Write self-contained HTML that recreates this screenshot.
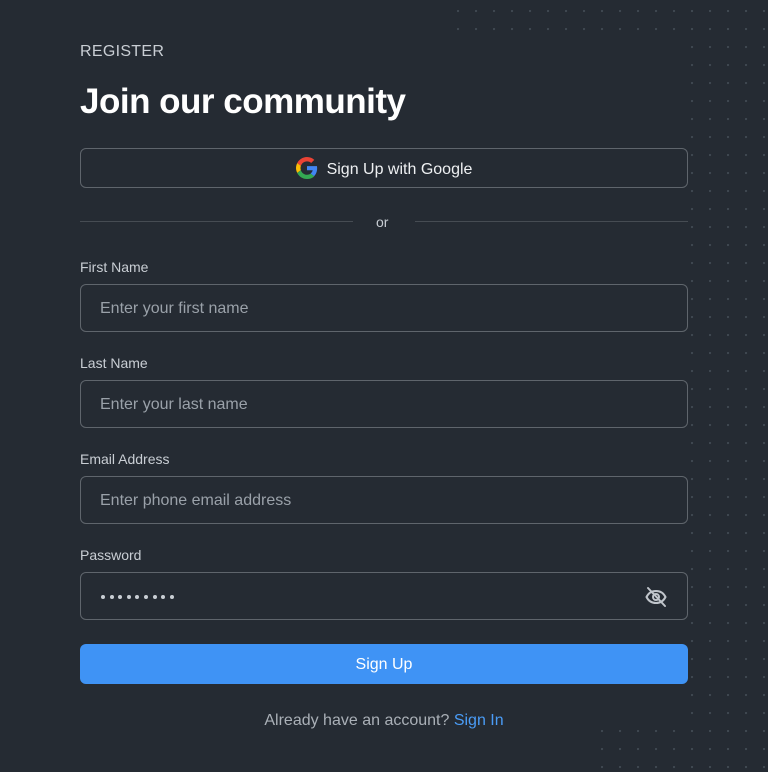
<!DOCTYPE html>
<html><head><meta charset="utf-8"><style>
*{box-sizing:border-box;margin:0;padding:0}
html,body{width:768px;height:772px;overflow:hidden}
body{background:#252b33;font-family:"Liberation Sans",sans-serif;position:relative;color:#fff}
.dots{position:absolute;background-image:radial-gradient(circle at 1px 1px,#3f4851 1px,transparent 1.3px);background-size:18px 18px}
.lbl{position:absolute;left:80px;font-size:14px;color:#c9ced4}
.inp{position:absolute;left:80px;width:608px;height:48px;border:1px solid #5f656c;border-radius:6px;font-size:16px;color:#9aa1a9;padding-left:19px;line-height:48px}
.pd{position:absolute;top:595px;width:4px;height:4px;border-radius:50%;background:#c9ced4}
</style></head><body>
<div class="dots" style="left:457px;top:10px;width:311px;height:30px"></div>
<div class="dots" style="left:691px;top:10px;width:77px;height:762px"></div>
<div class="dots" style="left:601px;top:730px;width:167px;height:42px"></div>

<div style="position:absolute;left:80px;top:43px;font-size:16px;color:#c9ced4;letter-spacing:.3px">REGISTER</div>
<div style="position:absolute;left:80px;top:82px;font-size:35px;font-weight:bold;letter-spacing:-.5px">Join our community</div>

<div style="position:absolute;left:80px;top:148px;width:608px;height:40px;border:1px solid #5f656c;border-radius:6px;display:flex;align-items:center;justify-content:center;font-size:16px;color:#eef0f2;padding-top:3px">
<svg width="22" height="22" viewBox="0 0 48 48" style="margin-right:9px;margin-top:-3px"><path fill="#EA4335" d="M24 9.5c3.5 0 6.6 1.2 9.1 3.6l6.8-6.800C35.8 2.4 30.3 0 24 0 14.6 0 6.6 5.4 2.7 13.3l7.9 6.1C12.5 13.6 17.8 9.5 24 9.5z"/><path fill="#4285F4" d="M46.1 24.5c0-1.6-.1-3.1-.4-4.5H24v9h12.4c-.5 2.9-2.2 5.3-4.6 7l7.5 5.8c4.4-4 6.8-10 6.8-17.3z"/><path fill="#FBBC05" d="M10.6 28.6c-.5-1.5-.8-3-.8-4.6s.3-3.1.8-4.6l-7.9-6.1C1 16.6 0 20.2 0 24s1 7.4 2.7 10.7l7.9-6.1z"/><path fill="#34A853" d="M24 48c6.5 0 11.9-2.1 15.9-5.8l-7.5-5.8c-2.1 1.4-4.8 2.3-8.400 2.3-6.2 0-11.5-4.2-13.4-9.9l-7.9 6.1C6.6 42.6 14.6 48 24 48z"/></svg>Sign Up with Google</div>

<div style="position:absolute;left:80px;top:221px;width:273px;height:1px;background:#464c53"></div>
<div style="position:absolute;left:415px;top:221px;width:273px;height:1px;background:#464c53"></div>
<div style="position:absolute;left:376px;top:214px;font-size:14px;color:#c9ced4">or</div>

<div class="lbl" style="top:259px">First Name</div>
<div class="inp" style="top:284px">Enter your first name</div>
<div class="lbl" style="top:355px">Last Name</div>
<div class="inp" style="top:380px">Enter your last name</div>
<div class="lbl" style="top:451px">Email Address</div>
<div class="inp" style="top:476px">Enter phone email address</div>
<div class="lbl" style="top:547px">Password</div>
<div class="inp" style="top:572px"></div>
<div class="pd" style="left:101px"></div><div class="pd" style="left:109.6px"></div><div class="pd" style="left:118.2px"></div><div class="pd" style="left:126.8px"></div><div class="pd" style="left:135.4px"></div><div class="pd" style="left:144px"></div><div class="pd" style="left:152.6px"></div><div class="pd" style="left:161.2px"></div><div class="pd" style="left:169.8px"></div>
<svg style="position:absolute;left:644px;top:585px" width="24" height="24" viewBox="0 0 24 24" fill="none" stroke="#c0c5cb" stroke-width="2" stroke-linecap="round"><path d="M2.5 12c2-4 5.5-6 9.5-6s7.5 2 9.5 6c-2 4-5.5 6-9.5 6s-7.5-2-9.5-6z"/><circle cx="12" cy="12" r="3"/><path d="M4 3l17 18"/></svg>

<div style="position:absolute;left:80px;top:644px;width:608px;height:40px;background:#3f93f5;border-radius:6px;text-align:center;line-height:42px;font-size:16px;color:#fff">Sign Up</div>
<div style="position:absolute;left:0;width:768px;top:712px;text-align:center;font-size:16px;color:#aab0b7">Already have an account? <span style="color:#4a9cf6">Sign In</span></div>
</body></html>
